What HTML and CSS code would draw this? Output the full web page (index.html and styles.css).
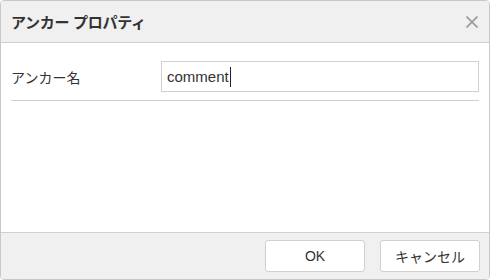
FILE: index.html
```html
<!DOCTYPE html>
<html lang="ja">
<head>
    <meta charset="UTF-8">
    <title>アンカー プロパティ</title>
    <link rel="stylesheet" href="styles.css">
</head>
<body>
    <div class="dialog">
        <div class="dialog-header">
            <span class="dialog-title">アンカー プロパティ</span>
            <span class="dialog-close">
                <svg width="12" height="12" viewBox="0 0 12 12">
                    <path d="M0.5 0.5 L11.5 11.5 M11.5 0.5 L0.5 11.5" stroke="#999" stroke-width="1.6" fill="none"/>
                </svg>
            </span>
        </div>
        <div class="dialog-body">
            <div class="field-row">
                <label class="field-label">アンカー名</label>
                <div class="field-input">comment<span class="caret"></span></div>
            </div>
            <div class="separator"></div>
        </div>
        <div class="dialog-footer">
            <button class="btn">OK</button>
            <button class="btn">キャンセル</button>
        </div>
    </div>
</body>
</html>
```

FILE: styles.css
```css
html, body {
    margin: 0;
    padding: 0;
    background: #fff;
}
body {
    font-family: "Liberation Sans", "Noto Sans CJK JP", sans-serif;
    color: #333;
}
.dialog {
    width: 490px;
    height: 280px;
    box-sizing: border-box;
    border: 1px solid #c8c8c8;
    border-radius: 4px;
    display: flex;
    flex-direction: column;
    overflow: hidden;
}
.dialog-header {
    height: 41px;
    background-color: #f0f0f0;
    border-bottom: 1px solid #d0d0d0;
    display: flex;
    align-items: center;
    justify-content: space-between;
    padding: 0 11px 0 10px;
}
.dialog-title {
    font-size: 15px;
    font-weight: bold;
    color: #333;
    letter-spacing: -0.3px;
}
.dialog-close {
    display: flex;
    margin-top: 1px;
}
.dialog-body {
    flex: 1;
    padding: 18px 10px 0 10px;
}
.field-row {
    display: flex;
    align-items: center;
}
.field-label {
    width: 150px;
    font-size: 14px;
    color: #333;
}
.field-input {
    flex: 1;
    height: 29px;
    border: 1px solid #d0d0d0;
    display: flex;
    align-items: center;
    padding-left: 5px;
    font-size: 15px;
    color: #333;
}
.caret {
    display: inline-block;
    width: 1px;
    height: 20px;
    background: #222;
    margin-left: 1px;
}
.separator {
    height: 1px;
    background: #d0d0d0;
    margin-top: 8px;
}
.dialog-footer {
    height: 46px;
    background-color: #f0f0f0;
    border-top: 1px solid #d0d0d0;
    display: flex;
    justify-content: flex-end;
    align-items: center;
    gap: 15px;
    padding-right: 9px;
}
.btn {
    width: 100px;
    height: 32px;
    background: #fff;
    border: 1px solid #d0d0d0;
    border-radius: 3px;
    font-family: "Liberation Sans", "Noto Sans CJK JP", sans-serif;
    font-size: 14px;
    color: #333;
    padding: 0;
}
```
